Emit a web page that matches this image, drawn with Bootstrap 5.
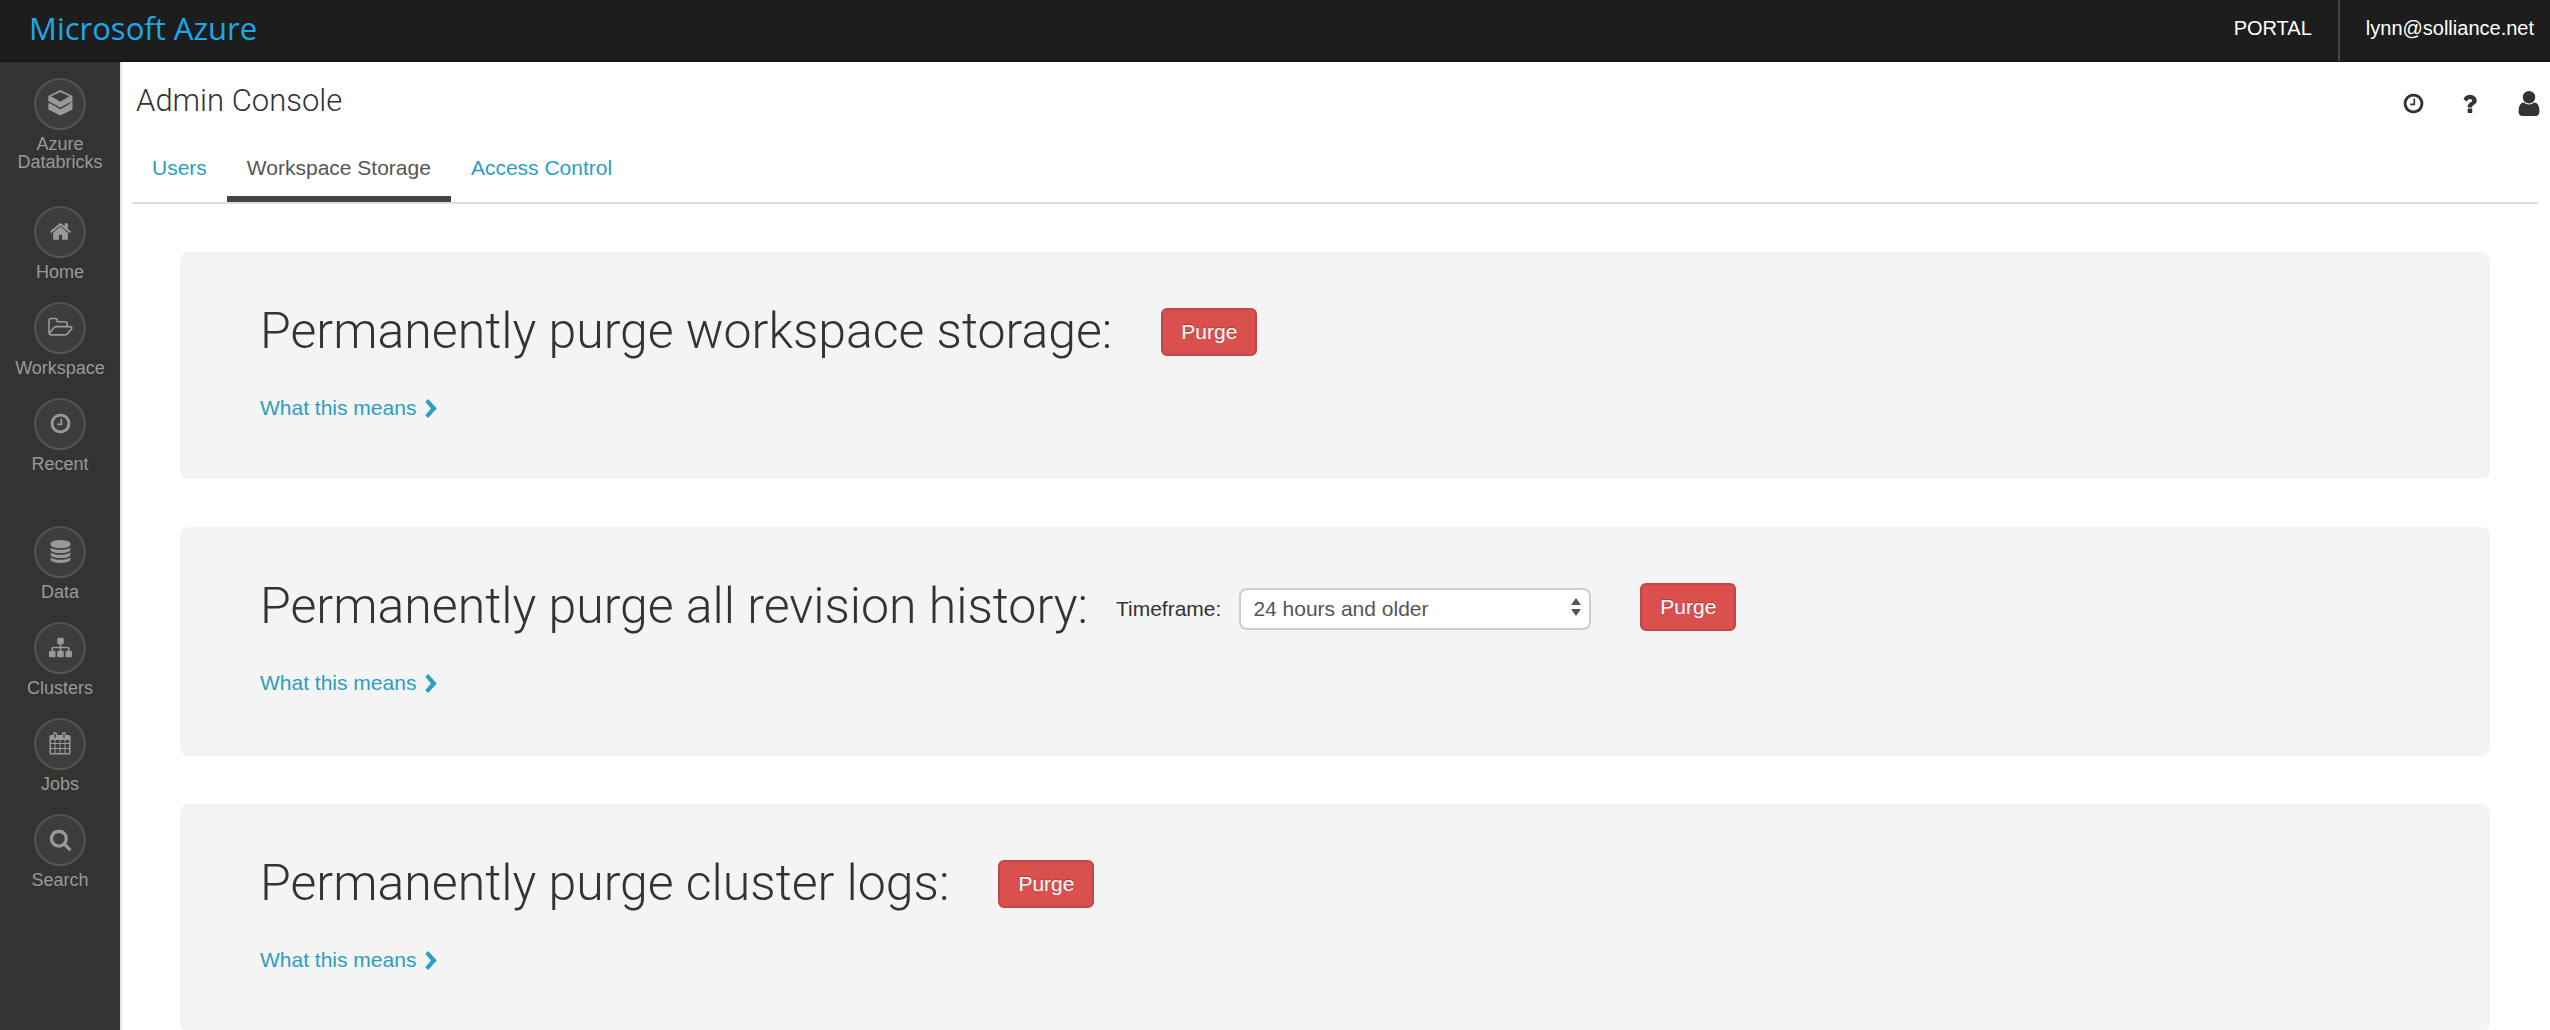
<!DOCTYPE html>
<html lang="en">
<head>
<meta charset="utf-8">
<meta name="viewport" content="width=device-width, initial-scale=1">
<title>Admin Console</title>
<link href="https://cdn.jsdelivr.net/npm/bootstrap@5.3.0/dist/css/bootstrap.min.css" rel="stylesheet">
<style>
body { font-family: "Liberation Sans", Arial, sans-serif; font-size: 21px; line-height: 28px; color: #333; background: #fff; overflow: hidden; }
a { text-decoration: none; color: #2a9fc1; }
svg { display: block; fill: currentColor; overflow: visible; flex: none; }
.topbar { height: 62px; background: #1d1d1d; border-bottom: 1px solid #111; font-size: 20px; }
.topbar a { color: #fff; padding-bottom: 5px; }
.topbar .brand { color: #1ba9ea; font-family: "Open Sans", sans-serif; font-size: 31px; padding-left: 29px; }
.topbar .portal { padding-right: 26px; }
.topbar .account { padding-left: 26px; padding-right: 16px; border-left: 2px solid #444; }
.app-body { height: calc(100vh - 62px); }
.sidebar { width: 122px; background: #333; border-right: 2px solid #e5e5e5; padding-top: 16px; }
.side-item { color: #999; font-size: 18px; line-height: 18px; text-align: center; margin-bottom: 21px; }
.side-item.group-end { margin-bottom: 53px; }
.side-item.first { margin-bottom: 35px; }
.disc { width: 52px; height: 52px; border: 2px solid #555; border-radius: 50%; background: #3d3d3d; padding: 0 0 2px; margin-bottom: 5px; }
.main-pane { padding: 0 12px 0 10px; min-width: 0; }
.title-row { height: 80px; padding-left: 4px; margin-right: -2px; }
.page-title { font-family: Roboto, sans-serif; font-weight: 300; font-size: 31px; line-height: 40px; padding-bottom: 2px; }
.tools { gap: 37px; padding-top: 2px; }
.tools a { color: #333; }
.tabs { border-bottom: 2px solid #ddd; }
.tabs a { padding: 12px 20px 14px; border-bottom: 6px solid transparent; }
.tabs a.active { color: #555; border-color: #444; }
.panels { padding: 48px 48px 0; gap: 48px; }
.purge-panel { background: #f4f4f4; border-radius: 8px; padding: 49px 80px 57px; }
.purge-panel.with-field { padding-bottom: 59px; }
.purge-title { font-family: Roboto, sans-serif; font-weight: 300; font-size: 50px; line-height: 60px; padding-bottom: 2px; }
.purge-btn { width: 96px; height: 48px; padding: 0; font-size: 21px; color: #fff; background: #d9504e; border: 2px solid #c34645; border-radius: 6px; text-shadow: 0 -1px 0 rgba(0,0,0,.25); margin-left: 49px; }
.purge-btn:hover { color: #fff; background: #c34645; }
.frame-field { gap: 18px; margin-left: 28px; padding-top: 4px; }
.frame-select { width: 352px; height: 42px; border: 2px solid #ccc; border-radius: 8px; padding: 0 12px; font-size: 21px; line-height: 28px; color: #555; background: #fff; }
.arrows { right: 10px; top: 10px; color: #555; pointer-events: none; }
.means { margin-top: 31px; gap: 9px; }
</style>
<script src="https://cdn.jsdelivr.net/npm/bootstrap@5.3.0/dist/js/bootstrap.bundle.min.js"></script>
</head>
<body>
<svg width="0" height="0" class="position-absolute" aria-hidden="true">
<symbol id="clock" viewBox="0 0 1792 1792"><path d="M1024 544v448q0 14-9 23t-23 9h-320q-14 0-23-9t-9-23v-64q0-14 9-23t23-9h224v-352q0-14 9-23t23-9h64q14 0 23 9t9 23zm416 352q0-148-73-273t-198-198-273-73-273 73-198 198-73 273 73 273 198 198 273 73 273-73 198-198 73-273zm224 0q0 209-103 385.500t-279.500 279.500-385.500 103-385.500-103-279.500-279.500-103-385.500 103-385.500 279.500-279.500 385.500-103 385.500 103 279.500 279.500 103 385.500z"/></symbol>
<symbol id="chevron" viewBox="0 0 12 20"><path d="M3 0l9 10-9 10-3-3 6-7-6-7z"/></symbol>
</svg>
<header class="topbar d-flex align-items-stretch">
  <a class="brand me-auto d-flex align-items-center" href="#">Microsoft Azure</a>
  <a class="portal d-flex align-items-center" href="#">PORTAL</a>
  <a class="account d-flex align-items-center" href="#">lynn@solliance.net</a>
</header>
<div class="app-body d-flex">
  <nav class="sidebar d-flex flex-column flex-shrink-0">
    <a class="side-item first d-flex flex-column align-items-center" href="#"><span class="disc d-flex align-items-center justify-content-center"><svg width="25" height="26" viewBox="0 0 25 26"><path fill-rule="evenodd" d="M12.300 0L24.500 6v5L12.300 17.500.300 11V6zM3 6.200l9.300 5.500 9.200-5.500-9.200-4z"/><path d="M.300 13.500l1-.500 11 6.200 9.700-5.400-.500-1 3-.800v7.500L12.300 25.500.300 19.500z"/></svg></span>Azure<br>Databricks</a>
    <a class="side-item d-flex flex-column align-items-center" href="#"><span class="disc d-flex align-items-center justify-content-center"><svg width="23" height="23" viewBox="0 0 1792 1792"><path d="M1472 992v480q0 26-19 45t-45 19h-384v-384h-256v384h-384q-26 0-45-19t-19-45v-480q0-1 .5-3t.5-3l575-474 575 474q1 2 1 6zm223-69l-62 74q-8 9-21 11h-3q-13 0-21-7l-692-577-692 577q-12 8-24 7-13-2-21-11l-62-74q-8-10-7-23.500t11-21.500l719-599q32-26 76-26t76 26l244 204v-195q0-14 9-23t23-9h192q14 0 23 9t9 23v408l219 182q10 8 11 21.500t-7 23.500z"/></svg></span>Home</a>
    <a class="side-item d-flex flex-column align-items-center" href="#"><span class="disc d-flex align-items-center justify-content-center"><svg width="23" height="23" viewBox="0 0 1792 1792"><path d="M1717 931q0-35-53-35h-1088q-40 0-85.500 21.500t-71.500 52.500l-294 363q-18 24-18 40 0 35 53 35h1088q40 0 86-22t71-53l294-363q18-22 18-39zm-1141-163h768v-160q0-40-28-68t-68-28h-576q-40 0-68-28t-28-68v-64q0-40-28-68t-68-28h-320q-40 0-68 28t-28 68v853l256-315q44-53 116-87.500t140-34.500zm1269 163q0 62-46 120l-295 363q-43 53-116 87.500t-140 34.500h-1088q-92 0-158-66t-66-158v-960q0-92 66-158t158-66h320q92 0 158 66t66 158v32h544q92 0 158 66t66 158v160h192q54 0 99 24.500t67 70.500q15 32 15 68z"/></svg></span>Workspace</a>
    <a class="side-item group-end d-flex flex-column align-items-center" href="#"><span class="disc d-flex align-items-center justify-content-center"><svg width="23" height="23"><use href="#clock"/></svg></span>Recent</a>
    <a class="side-item d-flex flex-column align-items-center" href="#"><span class="disc d-flex align-items-center justify-content-center"><svg width="23" height="23" viewBox="0 0 1792 1792"><path d="M896 768q237 0 443-43t325-127v170q0 69-103 128t-280 93.500-385 34.500-385-34.500-280-93.500-103-128v-170q119 84 325 127t443 43zm0 768q237 0 443-43t325-127v170q0 69-103 128t-280 93.500-385 34.500-385-34.500-280-93.500-103-128v-170q119 84 325 127t443 43zm0-384q237 0 443-43t325-127v170q0 69-103 128t-280 93.500-385 34.500-385-34.500-280-93.500-103-128v-170q119 84 325 127t443 43zm0-1152q208 0 385 34.500t280 93.500 103 128v128q0 69-103 128t-280 93.500-385 34.500-385-34.500-280-93.500-103-128v-128q0-69 103-128t280-93.500 385-34.500z"/></svg></span>Data</a>
    <a class="side-item d-flex flex-column align-items-center" href="#"><span class="disc d-flex align-items-center justify-content-center"><svg width="23" height="23" viewBox="0 0 1792 1792"><path d="M1792 1248v320q0 40-28 68t-68 28h-320q-40 0-68-28t-28-68v-320q0-40 28-68t68-28h96v-192h-512v192h96q40 0 68 28t28 68v320q0 40-28 68t-68 28h-320q-40 0-68-28t-28-68v-320q0-40 28-68t68-28h96v-192h-512v192h96q40 0 68 28t28 68v320q0 40-28 68t-68 28h-320q-40 0-68-28t-28-68v-320q0-40 28-68t68-28h96v-192q0-52 38-90t90-38h512v-192h-96q-40 0-68-28t-28-68v-320q0-40 28-68t68-28h320q40 0 68 28t28 68v320q0 40-28 68t-68 28h-96v192h512q52 0 90 38t38 90v192h96q40 0 68 28t28 68z"/></svg></span>Clusters</a>
    <a class="side-item d-flex flex-column align-items-center" href="#"><span class="disc d-flex align-items-center justify-content-center"><svg width="22" height="23" viewBox="0 0 22 23"><path fill-rule="evenodd" d="M2 3h2V2q0-2 2-2t2 2v1h5V2q0-2 2-2t2 2v1h3q1.500 0 1.500 1.500v16.500q0 1.500-1.500 1.500H2Q.500 22.500.500 21V4.500Q.500 3 2 3zM5.300 1.800v4h1.400v-4zM14.300 1.800v4h1.400v-4zM2 8v3h3.500V8zM6.500 8v3h4V8zM11.500 8v3h4V8zM16.500 8v3H20V8zM2 12v4h3.500v-4zM6.500 12v4h4v-4zM11.500 12v4h4v-4zM16.500 12v4H20v-4zM2 17v4h3.500v-4zM6.500 17v4h4v-4zM11.500 17v4h4v-4zM16.500 17v4H20v-4z"/></svg></span>Jobs</a>
    <a class="side-item d-flex flex-column align-items-center" href="#"><span class="disc d-flex align-items-center justify-content-center"><svg width="23" height="23" viewBox="0 0 1792 1792"><path d="M1216 832q0-185-131.500-316.500t-316.500-131.500-316.500 131.500-131.500 316.500 131.500 316.500 316.500 131.500 316.500-131.500 131.500-316.500zm512 832q0 52-38 90t-90 38q-54 0-90-38l-343-342q-179 124-399 124-143 0-273.500-55.500t-225-150-150-225-55.500-273.500 55.500-273.500 150-225 225-150 273.500-55.500 273.500 55.500 225 150 150 225 55.500 273.500q0 220-124 399l343 343q37 37 37 90z"/></svg></span>Search</a>
  </nav>
  <main class="main-pane flex-grow-1">
    <div class="title-row d-flex align-items-center justify-content-between">
      <h1 class="page-title mb-0">Admin Console</h1>
      <div class="tools d-flex align-items-center">
        <a href="#" aria-label="History"><svg width="23" height="23"><use href="#clock"/></svg></a>
        <a href="#" aria-label="Help"><svg width="15" height="20" viewBox="388 128 1016 1408"><path d="M1088 1256v240q0 16-12 28t-28 12h-240q-16 0-28-12t-12-28v-240q0-16 12-28t28-12h240q16 0 28 12t12 28zm316-600q0 54-15.500 101t-35 76.500-55 59.500-57.500 43.500-61 35.500q-41 23-68.500 65t-27.500 67q0 17-12 32.500t-28 15.500h-240q-15 0-25.500-18.500t-10.500-37.500v-45q0-83 65-156.500t143-108.500q59-27 84-56t25-76q0-42-46.500-74t-107.500-32q-65 0-108 29-35 25-107 115-13 16-31 16-12 0-25-8l-164-125q-13-10-15.500-25t5.500-28q160-266 464-266 80 0 161 31t146 83 106 127.500 41 158.500z"/></svg></a>
        <a href="#" aria-label="Account" class="ms-1"><svg width="22" height="25" viewBox="256 128 1280 1536"><path d="M1536 1399q0 109-62.500 187t-150.500 78h-854q-88 0-150.500-78t-62.500-187q0-85 8.500-160.500t31.500-152 58.500-131 94-89 134.500-34.500q131 128 313 128t313-128q76 0 134.500 34.500t94 89 58.500 131 31.500 152 8.500 160.500zm-256-887q0 159-112.500 271.500t-271.500 112.500-271.500-112.500-112.500-271.500 112.500-271.500 271.500-112.500 271.500 112.500 112.500 271.500z"/></svg></a>
      </div>
    </div>
    <nav class="tabs d-flex">
      <a href="#">Users</a>
      <a href="#" class="active" aria-current="page">Workspace Storage</a>
      <a href="#">Access Control</a>
    </nav>
    <div class="panels d-flex flex-column">
      <section class="purge-panel">
        <div class="d-flex align-items-center"><h2 class="purge-title mb-0">Permanently purge workspace storage:</h2><button type="button" class="btn purge-btn">Purge</button></div>
        <a class="means d-flex align-items-center" href="#">What this means <svg width="12" height="19"><use href="#chevron"/></svg></a>
      </section>
      <section class="purge-panel with-field">
        <div class="d-flex align-items-center"><h2 class="purge-title mb-0">Permanently purge all revision history:</h2>
          <div class="frame-field d-flex align-items-center"><label for="timeframe">Timeframe:</label>
          <div class="position-relative"><select id="timeframe" class="form-select frame-select"><option>24 hours and older</option></select><svg class="arrows position-absolute" width="10" height="18" viewBox="0 0 10 18"><path d="M5 0l5 7H0zM0 11h10l-5 7z"/></svg></div></div>
          <button type="button" class="btn purge-btn">Purge</button></div>
        <a class="means d-flex align-items-center" href="#">What this means <svg width="12" height="19"><use href="#chevron"/></svg></a>
      </section>
      <section class="purge-panel">
        <div class="d-flex align-items-center"><h2 class="purge-title mb-0">Permanently purge cluster logs:</h2><button type="button" class="btn purge-btn">Purge</button></div>
        <a class="means d-flex align-items-center" href="#">What this means <svg width="12" height="19"><use href="#chevron"/></svg></a>
      </section>
    </div>
  </main>
</div>
</body>
</html>
